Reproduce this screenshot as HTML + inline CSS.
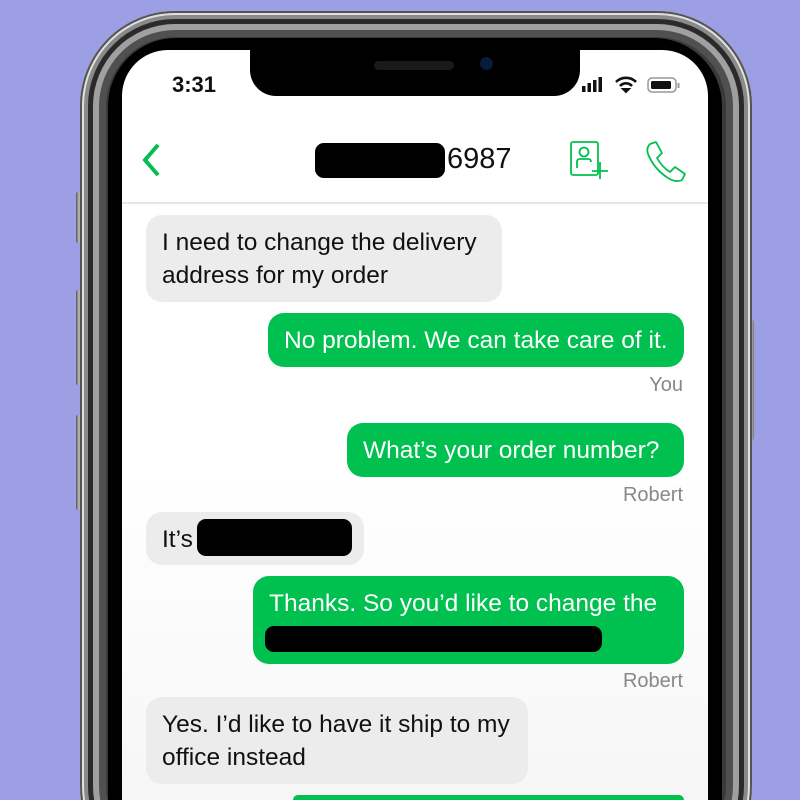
<!DOCTYPE html>
<html><head><style>
html,body{margin:0;width:800px;height:800px;overflow:hidden}
body{background:#9d9fe4;font-family:"Liberation Sans",sans-serif}
#w{position:relative;width:800px;height:800px;overflow:hidden}
.abs{position:absolute}
.clip{left:0;top:0;width:800px;height:800px;overflow:hidden}
.frame{left:80px;top:11px;width:672px;height:870px;border-radius:95px;background:#3a3a3a;box-shadow:inset 0 0 0 2px #555,inset 0 0 0 4px #e0e0e0,inset 0 0 0 8px #8a8a8a,inset 0 0 0 13px #2a2a2a,inset 0 0 0 19px #a0a0a0,inset 0 0 0 26px #505050}
.black{left:108px;top:38px;width:614px;height:762px;border-radius:68px 68px 0 0;background:#000}
.btn{background:linear-gradient(90deg,#555,#bbb,#777);border-radius:2px;width:6px}
.screen{left:122px;top:50px;width:586px;height:750px;border-radius:46px 46px 0 0;background:linear-gradient(#fff 0,#fff 420px,#f6f6f6 750px)}
.notch{left:250px;top:40px;width:330px;height:56px;background:#000;border-radius:0 0 26px 26px}
.b{position:absolute;font-size:24.5px;line-height:33px;color:#111;border-radius:16px;box-sizing:border-box;padding:11px 16px;white-space:nowrap}
.g{background:#ececec}
.gr{background:#00c04f;color:#fff}
.lbl{position:absolute;right:117px;font-size:20px;color:#888}
.red{position:absolute;background:#000;border-radius:9px}
</style></head><body><div id="w">
<div class="abs btn" style="left:76px;top:192px;height:51px"></div>
<div class="abs btn" style="left:76px;top:290px;height:95px"></div>
<div class="abs btn" style="left:76px;top:415px;height:95px"></div>
<div class="abs btn" style="left:748px;top:320px;height:120px"></div>
<div class="abs clip"><div class="abs frame"></div></div>
<div class="abs black"></div>
<div class="abs screen"></div>
<div class="abs notch"></div>
<div class="abs" style="left:374px;top:61px;width:80px;height:9px;border-radius:5px;background:#1a1a1a"></div>
<div class="abs" style="left:480px;top:57px;width:13px;height:13px;border-radius:50%;background:#0a1a3a"></div>
<div class="abs" style="left:172px;top:72px;font-size:22px;font-weight:bold;color:#111">3:31</div>
<svg class="abs" style="left:580px;top:74px" width="110" height="22">
<rect x="2" y="12" width="3.5" height="6" fill="#111"/><rect x="7.5" y="9" width="3.5" height="9" fill="#111"/><rect x="13" y="6" width="3.5" height="12" fill="#111"/><rect x="18.5" y="3" width="3.5" height="15" fill="#111"/>
<path d="M36 8 A14 14 0 0 1 56 8" stroke="#111" stroke-width="2.6" fill="none"/><path d="M40 12 A8 8 0 0 1 52 12" stroke="#111" stroke-width="2.6" fill="none"/><path d="M43 15 L46 18 L49 15 Z" fill="#111" stroke="#111" stroke-width="2"/>
<rect x="68" y="4" width="28" height="14" rx="4" fill="none" stroke="#999" stroke-width="1.5"/><rect x="71" y="7" width="20" height="8" rx="1.5" fill="#111"/><rect x="97.5" y="9" width="2" height="5" fill="#999"/>
</svg>
<svg class="abs" style="left:138px;top:140px" width="30" height="40"><path d="M20 5 L7 20 L20 35" stroke="#00c04f" stroke-width="4" fill="none"/></svg>
<div class="red" style="left:315px;top:143px;width:130px;height:35px"></div>
<div class="abs" style="left:447px;top:143px;font-size:29px;color:#111">6987</div>
<svg class="abs" style="left:565px;top:138px" width="50" height="45"><rect x="6" y="4" width="27" height="33" rx="2" fill="none" stroke="#00c04f" stroke-width="1.8"/><circle cx="19" cy="14" r="4.5" fill="none" stroke="#00c04f" stroke-width="1.8"/><path d="M12 30 V24 Q12 21 15 21 H23 Q26 21 26 24" fill="none" stroke="#00c04f" stroke-width="1.8"/><path d="M35 24 V41 M27 33 H43" stroke="#00c04f" stroke-width="1.8"/></svg>
<svg class="abs" style="left:640px;top:138px" width="50" height="45"><path d="M10 6 L16 4 L22 15 L17 20 Q22 29 30 34 L35 29 L45 36 L42 42 Q36 45 28 40 Q14 31 8 16 Q6 10 10 6 Z" fill="none" stroke="#00c04f" stroke-width="1.8" stroke-linejoin="round"/></svg>
<div class="abs" style="left:122px;top:202px;width:586px;height:2px;background:#e6e6e6"></div>
<div class="b g" style="left:146px;top:215px;width:356px;height:87px">I need to change the delivery<br>address for my order</div>
<div class="b gr" style="left:268px;top:313px;width:416px;height:54px">No problem. We can take care of it.</div>
<div class="lbl" style="top:374px">You</div>
<div class="b gr" style="left:347px;top:423px;width:337px;height:54px">What’s your order number?</div>
<div class="lbl" style="top:484px">Robert</div>
<div class="b g" style="left:146px;top:512px;width:218px;height:53px">It’s</div>
<div class="red" style="left:197px;top:519px;width:155px;height:37px"></div>
<div class="b gr" style="left:253px;top:576px;width:431px;height:88px">Thanks. So you’d like to change the</div>
<div class="red" style="left:265px;top:626px;width:337px;height:26px"></div>
<div class="lbl" style="top:670px">Robert</div>
<div class="b g" style="left:146px;top:697px;width:382px;height:87px">Yes. I’d like to have it ship to my<br>office instead</div>
<div class="abs" style="left:293px;top:795px;width:391px;height:5px;background:#00c04f;border-radius:16px 16px 0 0"></div>
</div></body></html>
